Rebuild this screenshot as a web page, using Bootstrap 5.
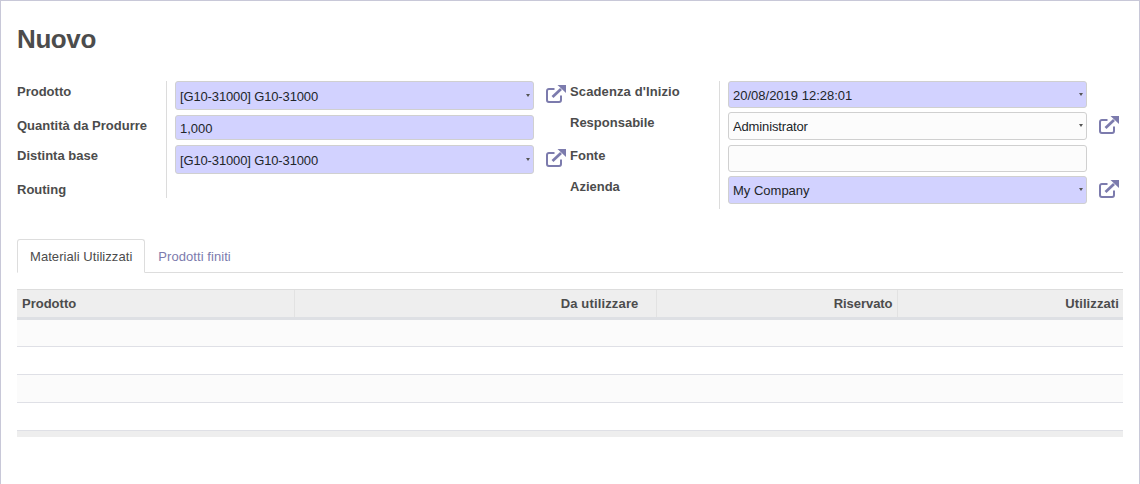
<!DOCTYPE html>
<html lang="it"><head><meta charset="utf-8"><title>Nuovo</title>
<link href="https://cdn.jsdelivr.net/npm/bootstrap@5.3.0/dist/css/bootstrap.min.css" rel="stylesheet">
<style>
html,body{height:100%}
body{font-family:"Liberation Sans",Arial,sans-serif;font-size:13px;line-height:20px;color:#4c4c4c;background:#fff;overflow:hidden}
.sheet{height:484px;border:solid #c8c8d8;border-width:1px 1px 0 1px;padding:0 16px}
.ttl{font-family:"Liberation Sans",Arial,sans-serif;font-size:26px;font-weight:700;line-height:30px;margin:23px 0 27px;color:#4c4c4c;letter-spacing:-.4px}
.grp{width:553px}
.frow{display:flex}
.flab{width:150px;flex:none;font-weight:700;border-right:1px solid #dcdcdc;white-space:nowrap;padding-top:1px}
.flab.wide{letter-spacing:.12px}
.fval{margin-left:8px;width:359px;flex:none;position:relative}
.fval .form-control{font-size:13px;line-height:20px;color:#212529;padding:1px 4px 0;height:100%;border:1px solid #d0d0d0;border-radius:3px;background:#fcfcfc;box-shadow:none}
.fval .form-control.req{background:#d2d2ff}
.fval.c28 .form-control{padding-top:0}
.fval .form-control.tight{letter-spacing:-.14px}
.caret-dn{position:absolute;right:4px;top:50%;margin-top:-2px;border:solid transparent;border-width:3px 2.5px 0;border-top-color:#555}
.extl{width:20px;height:18px;margin:4px 0 0 12px;flex:none;color:#7c7bad;display:block}
.h34{height:34px}.h30{height:30px}.h19{height:19px}.h31{height:31px}.h33{height:33px}
.c29{height:29px}.c25{height:25px}.c27{height:27px}.c28{height:28px}
.tabs-x{margin-top:30px;border-bottom:1px solid #ddd;height:34px}
.tabs-x .nav-link{font-size:13px;line-height:18px;padding:8px 12px;height:34px;color:#7c7bad;border-radius:3px 3px 0 0;margin-bottom:-1px;letter-spacing:.06px}
.tabs-x .nav-link.active{color:#4c4c4c;border-color:#ddd #ddd #fff}
.tbl{width:1106px;table-layout:fixed;margin:16px 0 0;border-collapse:collapse}
.tbl th{background:#eee;font-weight:700;height:29px;padding:0 4px 0 5px;border-top:1px solid #ddd;border-bottom:3px solid #dee0e4;border-left:1px solid #e2e2e2;line-height:26px;color:#4c4c4c}
.tbl th:first-child{border-left:0}
.tbl td{height:28px;padding:0;border-bottom:1px solid #dfe0e6}
.tbl tbody tr:nth-child(odd) td{background:#fbfbfb}
.tbl tfoot td{height:6px;background:#eee;border:0}
.tbl th.r17{padding-right:17px;letter-spacing:.15px}
.tbl th.r3{padding-right:4px;letter-spacing:-.05px}
.tbl th.lsp{letter-spacing:.1px}
</style></head><body>
<svg width="0" height="0" class="d-none"><symbol id="ext" viewBox="0 0 20 18"><path d="M8.500 4H2.900A1.900 1.900 0 0 0 1 5.900v9.200A1.900 1.900 0 0 0 2.900 17h10.200a1.900 1.900 0 0 0 1.900-1.900V10.500" fill="none" stroke="currentColor" stroke-width="2"/><path d="M6.500 12 15 4" fill="none" stroke="currentColor" stroke-width="2.800"/><path d="M11.500 0H20V8Z" fill="currentColor"/></symbol></svg>
<div class="sheet">
<h1 class="ttl">Nuovo</h1>
<div class="d-flex">
 <div class="grp">
  <div class="frow h34"><div class="flab">Prodotto</div><div class="fval c29"><input class="form-control req tight" value="[G10-31000] G10-31000"><span class="caret-dn"></span></div><svg class="extl"><use href="#ext"/></svg></div>
  <div class="frow h30"><div class="flab">Quantità da Produrre</div><div class="fval c25"><input class="form-control req" value="1,000"></div></div>
  <div class="frow h34"><div class="flab">Distinta base</div><div class="fval c29"><input class="form-control req tight" value="[G10-31000] G10-31000"><span class="caret-dn"></span></div><svg class="extl"><use href="#ext"/></svg></div>
  <div class="frow h19"><div class="flab">Routing</div></div>
 </div>
 <div class="grp">
  <div class="frow h31"><div class="flab wide">Scadenza d'Inizio</div><div class="fval c27"><input class="form-control req" value="20/08/2019 12:28:01"><span class="caret-dn"></span></div></div>
  <div class="frow h33"><div class="flab">Responsabile</div><div class="fval c28"><input class="form-control tight" value="Administrator"><span class="caret-dn"></span></div><svg class="extl"><use href="#ext"/></svg></div>
  <div class="frow h31"><div class="flab">Fonte</div><div class="fval c27"><input class="form-control" value=""></div></div>
  <div class="frow h33"><div class="flab">Azienda</div><div class="fval c28"><input class="form-control req" value="My Company"><span class="caret-dn"></span></div><svg class="extl"><use href="#ext"/></svg></div>
 </div>
</div>
<ul class="nav nav-tabs tabs-x">
 <li class="nav-item"><a class="nav-link active" href="#">Materiali Utilizzati</a></li>
 <li class="nav-item"><a class="nav-link" href="#">Prodotti finiti</a></li>
</ul>
<table class="tbl">
 <colgroup><col style="width:277px"><col style="width:362px"><col style="width:241px"><col></colgroup>
 <thead><tr><th>Prodotto</th><th class="text-end r17">Da utilizzare</th><th class="text-end r3">Riservato</th><th class="text-end lsp">Utilizzati</th></tr></thead>
 <tbody><tr><td colspan="4"></td></tr><tr><td colspan="4"></td></tr><tr><td colspan="4"></td></tr><tr><td colspan="4"></td></tr></tbody>
 <tfoot><tr><td colspan="4"></td></tr></tfoot>
</table>
</div>
<script src="https://cdn.jsdelivr.net/npm/bootstrap@5.3.0/dist/js/bootstrap.bundle.min.js"></script>
</body></html>
